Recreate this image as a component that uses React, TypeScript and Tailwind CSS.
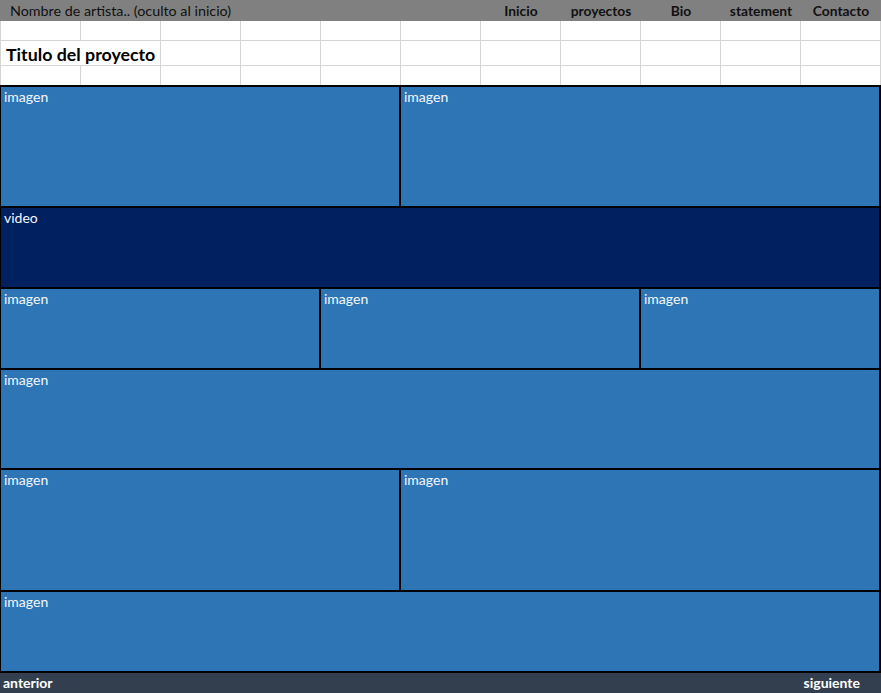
const navItems = ["Inicio", "proyectos", "Bio", "statement", "Contacto"];

const GridRow = ({ h, last }: { h: string; last?: boolean }) => (
  <div className="flex">
    {Array.from({ length: 11 }).map((_, i) => (
      <div
        key={i}
        className={`w-[80px] border-r border-[#d4d4d4] ${h} ${last ? "" : "border-b"}`}
      />
    ))}
  </div>
);

const Cell = ({ w, label = "imagen", dark }: { w: string; label?: string; dark?: boolean }) => (
  <div
    className={`${w} h-full border-r-2 border-black pl-[3px] pt-[1px] text-[14px] leading-[18px] text-[#f4f8fc] ${
      dark ? "bg-[#002060]" : "bg-[#2e75b6]"
    }`}
  >
    {label}
  </div>
);

const Row = ({ h, children }: { h: string; children: React.ReactNode }) => (
  <div className={`flex ${h} border-b-2 border-black`}>{children}</div>
);

export default function App() {
  return (
    <div className="w-[881px] h-[693px] overflow-hidden bg-white font-['Lato',sans-serif]">
      {/* top bar */}
      <div className="flex h-[21px] bg-[#808080] text-[14.3px] leading-[21px] text-[#111]">
        <div className="w-[481px] pl-[10px] whitespace-nowrap">Nombre de artista.. (oculto al inicio)</div>
        {navItems.map((n) => (
          <div key={n} className="w-[80px] text-center text-[13.8px] font-bold">
            {n}
          </div>
        ))}
      </div>

      {/* sheet rows */}
      <div className="border-l border-[#d4d4d4]">
        <GridRow h="h-[20px]" />
        <div className="flex">
          <div className="w-[160px] h-[25px] border-r border-b border-[#d4d4d4] pl-[5px] pt-[1px] text-[17.8px] font-bold leading-[25px] text-black whitespace-nowrap">
            Titulo del proyecto
          </div>
          {Array.from({ length: 9 }).map((_, i) => (
            <div key={i} className="w-[80px] h-[25px] border-r border-b border-[#d4d4d4]" />
          ))}
        </div>
        <GridRow h="h-[19px]" last />
      </div>

      {/* content blocks */}
      <div className="border-t-2 border-l border-black">
        <Row h="h-[121px]">
          <Cell w="w-[400px]" />
          <Cell w="w-[480px]" />
        </Row>
        <Row h="h-[81px]">
          <Cell w="w-[880px]" label="video" dark />
        </Row>
        <Row h="h-[81px]">
          <Cell w="w-[320px]" />
          <Cell w="w-[320px]" />
          <Cell w="w-[240px]" />
        </Row>
        <Row h="h-[100px]">
          <Cell w="w-[880px]" />
        </Row>
        <Row h="h-[122px]">
          <Cell w="w-[400px]" />
          <Cell w="w-[480px]" />
        </Row>
        <Row h="h-[81px]">
          <Cell w="w-[880px]" />
        </Row>
      </div>

      {/* footer */}
      <div className="flex h-[21px] justify-between bg-[#333f4f] pl-[3px] pr-[21px] text-[14px] font-bold leading-[20px] text-white">
        <span>anterior</span>
        <span>siguiente</span>
      </div>
    </div>
  );
}
